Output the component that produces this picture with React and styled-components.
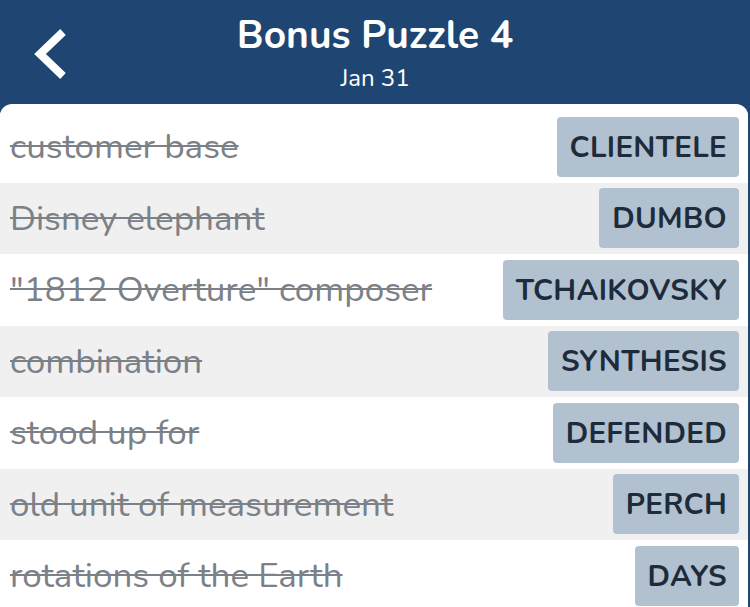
import React from 'react'
import styled, { createGlobalStyle } from 'styled-components'

const GlobalStyle = createGlobalStyle`
  html, body {
    margin: 0;
    padding: 0;
    background: #1f4672;
    font-family: 'Nunito', 'Lato', 'Liberation Sans', sans-serif;
  }
  #root {
    width: 750px;
    height: 607px;
    overflow: hidden;
  }
`

const Header = styled.header`
  position: relative;
  height: 104px;
  display: flex;
  flex-direction: column;
  align-items: center;
  color: #fff;
`

const Title = styled.h1`
  margin: 14px 0 0;
  font-size: 39px;
  font-weight: 700;
  line-height: 44px;
`

const Subtitle = styled.div`
  margin-top: 6px;
  font-size: 24px;
  line-height: 28px;
`

const BackButton = styled.button`
  position: absolute;
  left: 28px;
  top: 24px;
  width: 44px;
  height: 60px;
  padding: 0;
  border: 0;
  background: none;
  cursor: pointer;
`

const Panel = styled.main`
  margin-right: 2px;
  background: #fff;
  border-radius: 12px 12px 0 0;
  padding-top: 7px;
  overflow: hidden;
`

const Row = styled.div`
  height: 71.5px;
  display: flex;
  align-items: center;
  justify-content: space-between;
  padding: 0 9px 0 10px;
  box-sizing: border-box;
  background: ${(p) => (p.$shaded ? '#f0f0f0' : '#fff')};
`

const Clue = styled.span`
  font-size: 35px;
  color: #7c8187;
  text-decoration: line-through;
  text-decoration-thickness: 2px;
  white-space: nowrap;
`

const Answer = styled.span`
  height: 60px;
  display: flex;
  align-items: center;
  padding: 0 12px 0 13px;
  border-radius: 4px;
  background: #b1c1cf;
  color: #1d2b3b;
  font-size: 29.5px;
  font-weight: 700;
  letter-spacing: 0.3px;
`

const entries = [
  ['customer base', 'CLIENTELE'],
  ['Disney elephant', 'DUMBO'],
  ['"1812 Overture" composer', 'TCHAIKOVSKY'],
  ['combination', 'SYNTHESIS'],
  ['stood up for', 'DEFENDED'],
  ['old unit of measurement', 'PERCH'],
  ['rotations of the Earth', 'DAYS'],
]

export default function App() {
  return (
    <>
      <GlobalStyle />
      <Header>
        <BackButton aria-label="Back">
          <svg width="44" height="60" viewBox="0 0 44 60">
            <path d="M35 8 L12 30 L35 52" fill="none" stroke="#fff" strokeWidth="8" />
          </svg>
        </BackButton>
        <Title>Bonus Puzzle 4</Title>
        <Subtitle>Jan 31</Subtitle>
      </Header>
      <Panel>
        {entries.map(([clue, answer], i) => (
          <Row key={answer} $shaded={i % 2 === 1}>
            <Clue>{clue}</Clue>
            <Answer>{answer}</Answer>
          </Row>
        ))}
      </Panel>
    </>
  )
}
